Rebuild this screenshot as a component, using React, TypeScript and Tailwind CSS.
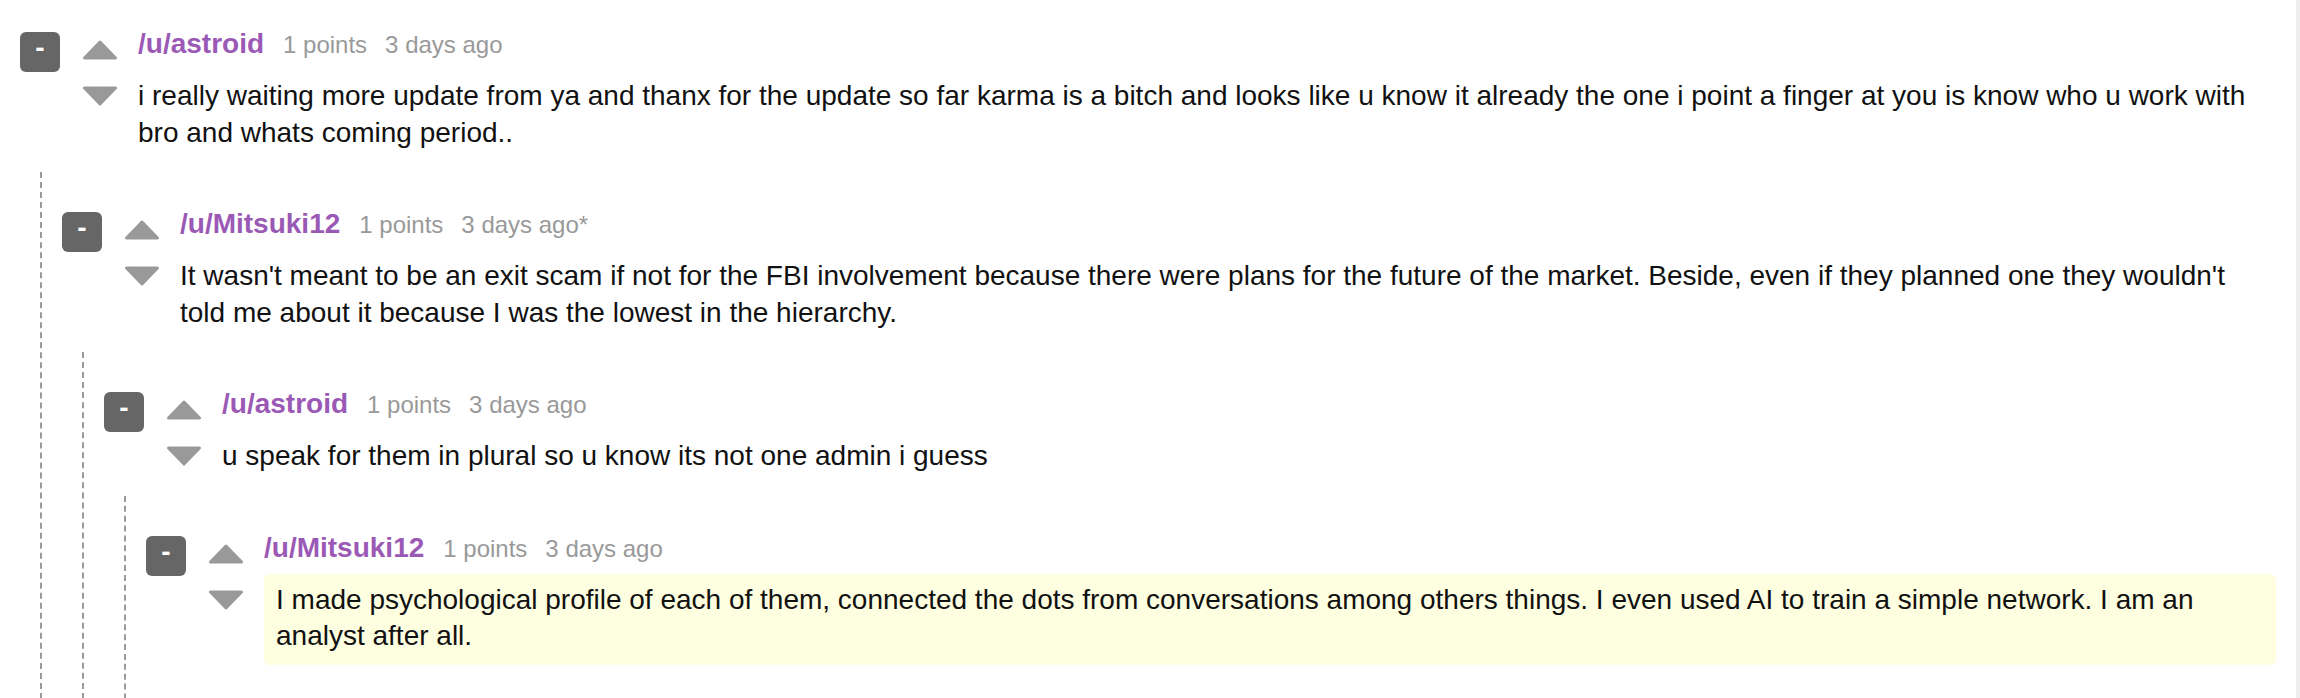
type Reply = {
  user: string
  points: number
  time: string
  text: string
  highlight?: boolean
  replies?: Reply[]
}

const thread: Reply = {
  user: "astroid",
  points: 1,
  time: "3 days ago",
  text: "i really waiting more update from ya and thanx for the update so far karma is a bitch and looks like u know it already the one i point a finger at you is know who u work with bro and whats coming period..",
  replies: [
    {
      user: "Mitsuki12",
      points: 1,
      time: "3 days ago*",
      text: "It wasn't meant to be an exit scam if not for the FBI involvement because there were plans for the future of the market. Beside, even if they planned one they wouldn't told me about it because I was the lowest in the hierarchy.",
      replies: [
        {
          user: "astroid",
          points: 1,
          time: "3 days ago",
          text: "u speak for them in plural so u know its not one admin i guess",
          replies: [
            {
              user: "Mitsuki12",
              points: 1,
              time: "3 days ago",
              highlight: true,
              text: "I made psychological profile of each of them, connected the dots from conversations among others things. I even used AI to train a simple network. I am an analyst after all.",
            },
          ],
        },
      ],
    },
  ],
}

const Arrow = ({ down }: { down?: boolean }) => (
  <svg width="36" height="20" viewBox="0 0 36 20" className="block">
    <path
      d={down ? "M2.5 2 H33.5 L18 18 Z" : "M18 2 L33.5 18 H2.5 Z"}
      fill="#999999"
      stroke="#999999"
      strokeWidth="3"
      strokeLinejoin="round"
    />
  </svg>
)

function Comment({ c, root }: { c: Reply; root?: boolean }) {
  const leaf = !c.replies || c.replies.length === 0
  return (
    <div className={`${root ? "pt-8" : "pt-10"} ${leaf ? "pb-16" : ""}`}>
      <div className="flex items-start">
        <div className="w-10 h-10 shrink-0 rounded-md bg-[#666666] text-white text-[28px] leading-[32px] font-bold text-center select-none">
          -
        </div>
        <div className="ml-[22px] w-9 shrink-0 flex flex-col pt-2 gap-[26px]">
          <Arrow />
          <Arrow down />
        </div>
        <div className="ml-5 flex-1 min-w-0">
          <div className="h-[38px] flex items-baseline whitespace-nowrap">
            <span className="text-[28px] leading-[23px] font-bold text-[#9b59b6]">/u/{c.user}</span>
            <span className="ml-[19px] text-[24px] leading-[23px] text-[#999999]">{c.points} points</span>
            <span className="ml-[18px] text-[24px] leading-[23px] text-[#999999]">{c.time}</span>
          </div>
          <div
            className={`pt-2 pb-[10px] text-[28px] leading-[36.5px] text-[#111111] ${
              c.highlight ? "bg-[#fefee0] px-3 rounded-md" : ""
            }`}
          >
            {c.text}
          </div>
        </div>
      </div>
      {!leaf && (
        <div className="mt-[11px] ml-5 pl-5 border-l-2 border-dashed border-[#9a9a9a]">
          {c.replies!.map((r, i) => (
            <Comment key={i} c={r} />
          ))}
        </div>
      )}
    </div>
  )
}

export default function App() {
  return (
    <div className="flex h-screen w-full overflow-hidden bg-white font-['Liberation_Sans',Arial,sans-serif]">
      <div className="flex-1 min-w-0 px-5">
        <Comment c={thread} root />
      </div>
      <div className="w-[4px] shrink-0 bg-[#eeeeee]" />
    </div>
  )
}
